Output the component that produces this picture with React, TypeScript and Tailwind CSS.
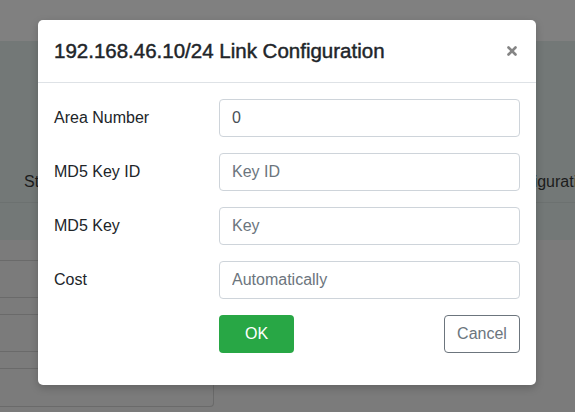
import { X } from 'lucide-react';

const fields = [
  { label: 'Area Number', value: '0', placeholder: '' },
  { label: 'MD5 Key ID', value: '', placeholder: 'Key ID' },
  { label: 'MD5 Key', value: '', placeholder: 'Key' },
  { label: 'Cost', value: '', placeholder: 'Automatically' },
];

function Backdrop() {
  return (
    <div className="flex h-[412px] w-[575px] flex-col overflow-hidden bg-[#7b7b7b] text-[16px] text-[#1c1c1c]">
      {/* navbar */}
      <div className="h-[41px] shrink-0 bg-[#808080]" />
      {/* header area */}
      <div className="flex h-[199px] shrink-0 flex-col bg-[#737877]">
        <div className="mt-[121px] flex h-[41px] items-center justify-between border-b border-[#6c7170] pl-[24px]">
          <span>Status</span>
          <span className="-mr-[20px]">Link Configuration</span>
        </div>
      </div>
      {/* left list */}
      <div className="w-[214px] rounded-br-[4px] border-b border-r border-[#6a6a6a]">
        <div className="h-[21px] border-b border-[#6a6a6a]" />
        <div className="h-[37px] border-b border-[#6a6a6a]" />
        <div className="h-[17px] border-b border-[#6a6a6a]" />
        <div className="h-[37px] border-b border-[#6a6a6a]" />
        <div className="h-[17px] border-b border-[#6a6a6a]" />
        <div className="h-[37px]" />
      </div>
    </div>
  );
}

export default function App() {
  return (
    <div className="relative h-[412px] w-[575px] font-['Liberation_Sans',Arial,sans-serif]">
      <Backdrop />

      {/* modal */}
      <div className="absolute left-[38px] top-[20px] w-[498px] rounded-[5px] bg-white shadow-[0_3px_9px_rgba(0,0,0,0.2)]">
        <div className="flex h-[63px] items-center justify-between border-b border-[#dee2e6] pl-[16px] pr-[17px]">
          <h4 className="pt-[1px] text-[20.5px] leading-none text-[#212529] [-webkit-text-stroke:0.45px_#212529]">
            192.168.46.10/24 Link Configuration
          </h4>
          <X className="h-[14px] w-[14px] text-[#858585]" strokeWidth={4.5} />
        </div>

        <div className="flex flex-col gap-[16px] px-[16px] pb-[32px] pt-[16px]">
          {fields.map((f) => (
            <div key={f.label} className="flex items-center">
              <label className="w-[165px] text-[16px] text-[#212529]">{f.label}</label>
              <input
                readOnly
                value={f.value}
                placeholder={f.placeholder}
                className="h-[38px] w-[301px] rounded-[4px] border border-[#ced4da] px-[12px] text-[16px] text-[#495057] outline-none placeholder:text-[#6c757d]"
              />
            </div>
          ))}

          <div className="flex items-center justify-between pl-[165px]">
            <button className="h-[38px] w-[75px] rounded-[4px] bg-[#28a745] text-[16px] text-white">OK</button>
            <button className="h-[38px] w-[76px] rounded-[4px] border border-[#6c757d] text-[16px] text-[#6c757d]">
              Cancel
            </button>
          </div>
        </div>
      </div>
    </div>
  );
}
